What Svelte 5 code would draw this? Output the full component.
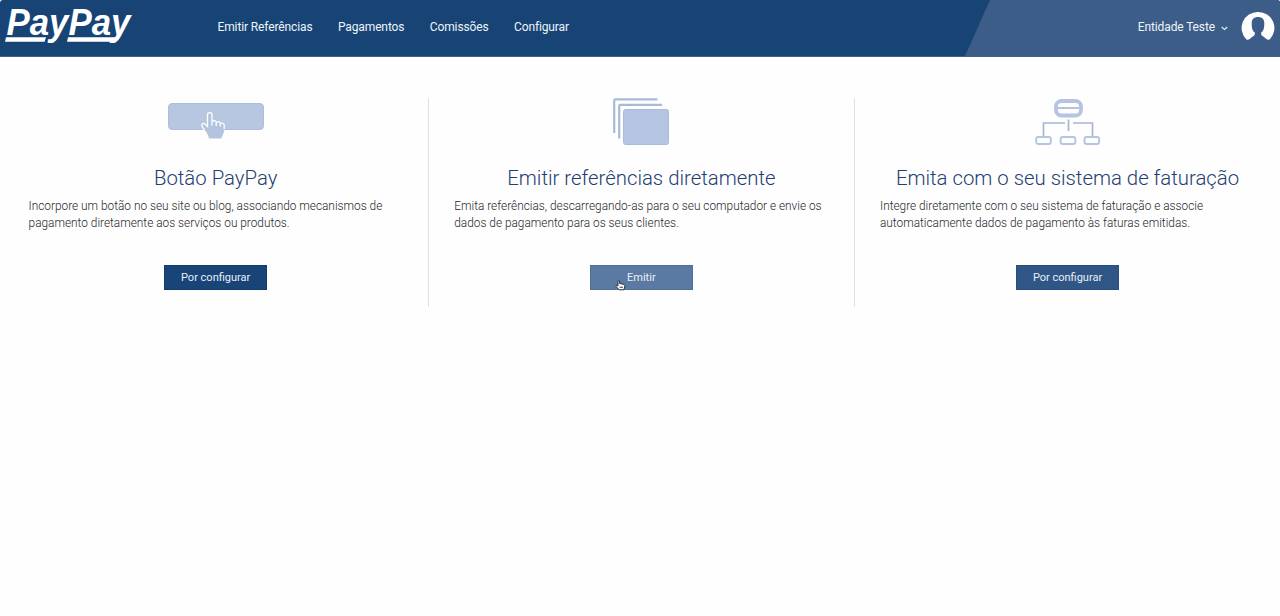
<script lang="ts">
	const links = ['Emitir Referências', 'Pagamentos', 'Comissões', 'Configurar'];

	const options = [
		{
			icon: 'button',
			title: 'Botão PayPay',
			lines: ['Incorpore um botão no seu site ou blog, associando mecanismos de', 'pagamento diretamente aos serviços ou produtos.'],
			action: 'Por configurar'
		},
		{
			icon: 'stack',
			title: 'Emitir referências diretamente',
			lines: ['Emita referências, descarregando-as para o seu computador e envie os', 'dados de pagamento para os seus clientes.'],
			action: 'Emitir'
		},
		{
			icon: 'system',
			title: 'Emita com o seu sistema de faturação',
			lines: ['Integre diretamente com o seu sistema de faturação e associe', 'automaticamente dados de pagamento às faturas emitidas.'],
			action: 'Por configurar'
		}
	];
</script>

<header>
	<a class="logo" href="#top" aria-label="PayPay">
		<svg width="136" height="56" viewBox="0 0 136 56">
			<text x="6.5" y="34.5" textLength="124" lengthAdjust="spacingAndGlyphs">PayPay</text>
			<path d="M6 37.3H46L44.6 41.7H5ZM68 37.3H119Q117 41.7 113 41.7H67Z" />
		</svg>
	</a>
	<nav>
		{#each links as link}
			<a href="#top">{link}</a>
		{/each}
	</nav>
	<div class="account">
		<span>Entidade Teste</span>
		<svg class="chevron" width="7" height="5" viewBox="0 0 7 5">
			<path d="M.7 1L3.5 3.4L6.3 1" fill="none" stroke="#e6edf6" stroke-width="1.2" />
		</svg>
		<svg class="avatar" width="34" height="34" viewBox="0 0 34 34">
			<path d="M17 1A16 16 0 0 0 5.5 28.5Q7 29.3 9 27.8Q10.5 26 12.6 25Q14.2 24 13.8 21.5C11 19.5 10.7 16 10.7 12C10.7 8 13.2 6 17 6S23.3 8 23.3 12C23.3 16 23 19.5 20.2 21.5Q19.8 24 21.4 25Q23.5 26 25 27.8Q27 29.3 28.5 28.5A16 16 0 0 0 17 1Z" fill="#fff" />
		</svg>
	</div>
</header>

<main>
	{#each options as option}
		<section class={option.icon}>
			<div class="icon">
				{#if option.icon === 'button'}
					<svg width="96" height="50" viewBox="0 0 96 50">
						<rect x=".5" y="5.5" width="95" height="26" rx="3.5" fill="#b7c7e2" stroke="#adbfdd" />
						<path d="M41 40.5C40 35 36 31.5 34 28.5C32.8 26 35.2 24.5 37.2 26.2L39.5 28.5V17C39.5 13.8 44 13.8 44 17V23.5C45 22 48 22.3 48.2 24.3C49.8 22.8 52 23.5 52.2 25.3C54.2 24.3 56.2 25.2 56.2 27.5V32C56.2 35 54 38 53.3 40.5Z" fill="#b3c4df" />
						<path d="M36.5 32L34 28.5C32.8 26 35.2 24.5 37.2 26.2L39.5 28.5V17C39.5 13.8 44 13.8 44 17V27.5M44 24C45 22 48 22.3 48.2 24.3V28M48.2 25C49.8 22.8 52 23.5 52.2 25.3V28.5M52.2 26C54.2 24.3 56.2 25.2 56.2 27.5V31" fill="none" stroke="#fff" stroke-width="1.3" />
					</svg>
				{:else if option.icon === 'stack'}
					<svg width="56" height="50" viewBox="0 0 56 50">
						<path d="M1.2 35V2.5Q1.2 1.4 2.5 1.4H44.5M6.2 40.5V8Q6.2 6.8 7.5 6.8H49" fill="none" stroke="#a9bad8" stroke-width="2.2" />
						<rect x="10.5" y="11.5" width="45" height="35" rx="2" fill="#b5c5e1" stroke="#a9bbdb" />
					</svg>
				{:else}
					<svg width="66" height="50" viewBox="0 0 66 50">
						<g fill="none" stroke="#b4c4e2">
							<rect x="21" y="3" width="25" height="14.5" rx="5.5" stroke-width="3.8" />
							<path d="M23 10H44" stroke="#9fafd0" stroke-width="1.5" />
							<path d="M8.5 38V25H30M38 25H57.5V38M33.5 21.5V33" stroke="#a6b5d2" stroke-width="1.7" />
							<rect x="1.2" y="39" width="14.6" height="7" rx="2" stroke-width="1.9" />
							<rect x="25.7" y="39" width="14.6" height="7" rx="2" stroke-width="1.9" />
							<rect x="49.5" y="39" width="14.6" height="7" rx="2" stroke-width="1.9" />
						</g>
					</svg>
				{/if}
			</div>
			<h2>{option.title}</h2>
			<p>
				{#each option.lines as line}
					<span>{line}</span>
				{/each}
			</p>
			<button>
				{option.action}
				{#if option.icon === 'stack'}
					<svg class="pointer" width="11" height="12" viewBox="0 0 11 12">
						<path d="M3 6V1.8Q3.8.7 4.6 1.8V4.5L9 5.4Q10.3 6 9.7 8L8.8 10.8H4.2L1 7.4Q1 5.7 3 7Z" fill="#fff" stroke="#26364b" />
						<path d="M4.5 8.2H8" stroke="#26364b" />
					</svg>
				{/if}
			</button>
		</section>
	{/each}
</main>

<style>
	:global(body) {
		background: #fefefe;
		font-family: Roboto, 'Liberation Sans', sans-serif;
	}

	header {
		display: flex;
		align-items: center;
		height: 56px;
		background: linear-gradient(#184475, #164474);
		border-bottom: 1px solid #436384;
		border-radius: 3px 3px 0 0;
		box-sizing: content-box;
		overflow: hidden;
	}

	.logo {
		width: 217.5px;
		height: 56px;
	}

	.logo text {
		font: italic bold 36px 'Liberation Sans', sans-serif;
	}

	.logo svg {
		fill: #fff;
	}

	nav {
		display: flex;
		gap: 25.4px;
		margin-top: -2px;
	}

	nav a {
		color: #eef4fb;
		font-size: 12px;
		letter-spacing: -.12px;
		line-height: 16px;
		text-decoration: none;
		white-space: nowrap;
	}

	.account {
		display: flex;
		align-items: center;
		justify-content: flex-end;
		width: 315px;
		height: 56px;
		margin-left: auto;
		padding-right: 5px;
		box-sizing: border-box;
		background: #3c5d88;
		clip-path: polygon(25px 0, 100% 0, 100% 100%, 0 100%);
		color: #eef4fb;
		font-size: 12px;
		letter-spacing: -.12px;
	}

	.account span {
		margin-top: -2px;
	}

	.chevron {
		margin: 0 13px 0 6px;
	}

	.avatar {
		margin-top: -1px;
	}

	main {
		display: grid;
		grid-template-columns: repeat(3, 425.7px);
		width: 1277.1px;
		margin-left: 3.3px;
		padding-top: 41px;
	}

	section {
		display: flex;
		flex-direction: column;
		align-items: center;
		height: 209px;
		box-sizing: border-box;
	}

	section:not(:last-child) {
		border-right: 1px solid #dfe0e3;
	}

	.icon {
		height: 50px;
	}

	.icon svg {
		display: block;
	}

	h2 {
		margin: 17px 0 0;
		color: #243d70;
		font-size: 20.35px;
		font-weight: 300;
		line-height: 26px;
		white-space: nowrap;
	}

	p {
		align-self: stretch;
		margin: 7px 0 0;
		padding-left: 25.3px;
		color: #26282d;
		font-size: 11.85px;
		font-weight: 300;
		line-height: 17px;
	}

	p span {
		display: block;
		white-space: nowrap;
	}

	button {
		position: relative;
		width: 103px;
		height: 25px;
		margin-top: 33px;
		padding: 0;
		border: 1px solid #123b6b;
		background: #184477;
		color: #e8eff8;
		font: 11px Roboto, 'Liberation Sans', sans-serif;
	}

	.stack button {
		border-color: #506f98;
		background: #5b7aa3;
	}

	.system button {
		border-color: #284d80;
		background: #305686;
	}

	.pointer {
		position: absolute;
		left: 24px;
		top: 13px;
	}
</style>
